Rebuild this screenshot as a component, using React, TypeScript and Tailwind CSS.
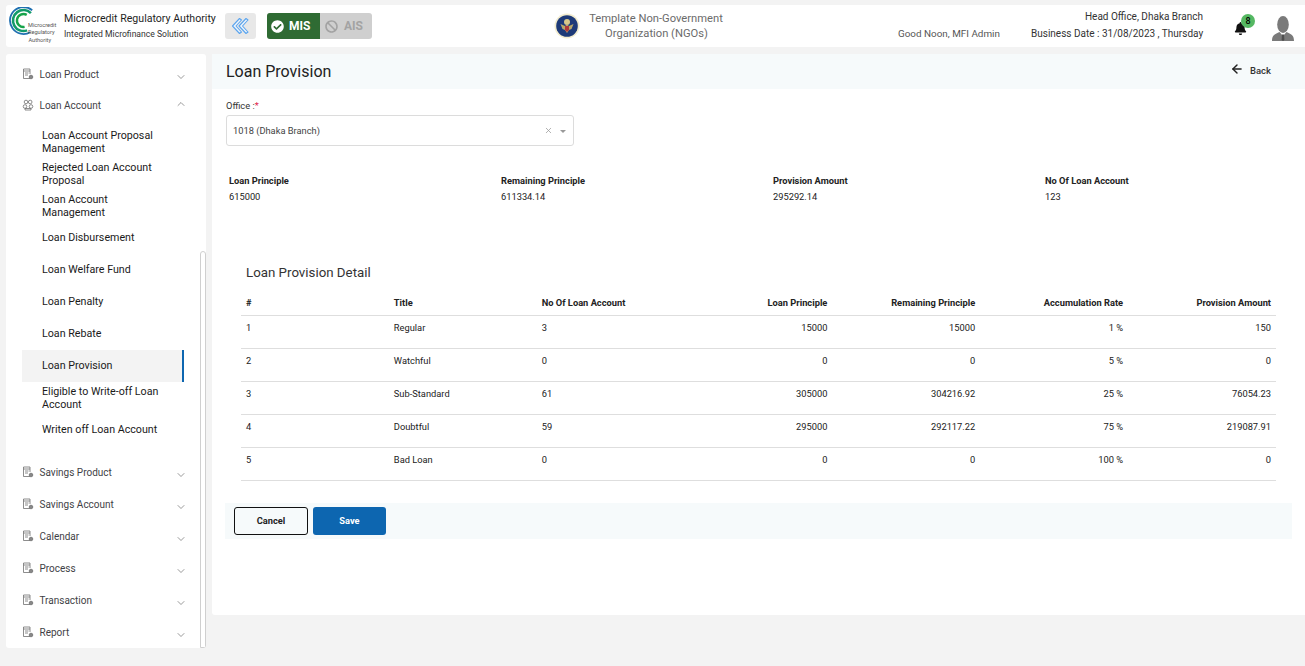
import React from "react";
import { FaBell, FaCheckCircle, FaBan } from "react-icons/fa";
import { ChevronDown, ChevronUp, ArrowLeft, X } from "lucide-react";

const Logo = () => (
  <svg width="48" height="38" viewBox="0 0 48 38" className="shrink-0">
    <path d="M23.2 3.2 A13.5 13.5 0 1 0 21.25 25.2" fill="none" stroke="#1f6fb0" strokeWidth="1.8" />
    <path d="M21.9 6.1 A10.5 10.5 0 1 0 18.1 23.4" fill="none" stroke="#129a6a" strokeWidth="2.6" />
    <path d="M17.75 7.9 A6.5 6.5 0 1 0 15.6 19.9" fill="none" stroke="#16a34a" strokeWidth="2.4" />
    <text x="19" y="19.5" fontSize="5.6" fill="#555" fontFamily="Roboto, sans-serif">Microcredit</text>
    <text x="19" y="26.5" fontSize="5.6" fill="#555" fontFamily="Roboto, sans-serif">Regulatory</text>
    <text x="19.5" y="34.5" fontSize="5.6" fill="#555" fontFamily="Roboto, sans-serif">Authority</text>
  </svg>
);

const DoubleChevron = () => (
  <svg width="20" height="18" viewBox="0 0 20 18" fill="none" stroke="#5ca5ee" strokeWidth="1.1" strokeLinejoin="round">
    <path d="M8.5 1.5 L1.5 9 L8.5 16.5 L10.5 15 L5 9 L10.5 3 Z" fill="#eef5fc" />
    <path d="M15 1.5 L8 9 L15 16.5 L17 15 L11.5 9 L17 3 Z" fill="#eef5fc" />
  </svg>
);

const Seal = () => (
  <svg width="26" height="26" viewBox="0 0 26 26">
    <circle cx="13" cy="13" r="12.5" fill="#f3edcf" />
    <circle cx="13" cy="13" r="10.8" fill="#1e3a78" />
    <circle cx="13" cy="9" r="3" fill="#d8c98a" />
    <path d="M6.5 11 L11 13 L13 11.5 L15 13 L19.5 11 L17.5 16 L15 17 L13 20 L11 17 L8.5 16 Z" fill="#b9a86a" />
    <path d="M11 13 H15 V17 L13 19 L11 17 Z" fill="#b03a3a" />
  </svg>
);

const Avatar = () => (
  <svg width="24" height="25" viewBox="0 0 24 25">
    <ellipse cx="12" cy="8.5" rx="5.8" ry="8.5" fill="#7a7a7a" />
    <path d="M1 25 C1 19 4 18 8.5 16 L12 20 L15.5 16 C20 18 23 19 23 25 Z" fill="#7a7a7a" />
    <path d="M11 18.5 L13 18.5 L13.4 24 L12 25 L10.6 24 Z" fill="#4f4f4f" />
  </svg>
);

const DocIcon = () => (
  <svg width="12" height="12" viewBox="0 0 12 12" fill="none" stroke="#707070" strokeWidth="0.8" className="shrink-0">
    <path d="M8 10.5 H1.5 V1 H8 V6" />
    <path d="M1.5 3 H8 M3 5 H6.5 M3 7 H6" />
    <circle cx="9" cy="9" r="1.8" fill="#888" />
  </svg>
);

const GroupIcon = () => (
  <svg width="12" height="12" viewBox="0 0 12 12" fill="none" stroke="#707070" strokeWidth="0.8" className="shrink-0">
    <circle cx="4" cy="3" r="1.8" />
    <circle cx="8.2" cy="3" r="1.8" />
    <circle cx="3" cy="7.5" r="1.8" />
    <circle cx="9" cy="7.5" r="1.8" />
    <path d="M3 9.5 H9 V11 H3 Z" />
  </svg>
);

const TopItem = ({ label, open, group }: { label: string; open?: boolean; group?: boolean }) => (
  <div className="h-8 flex items-center pl-[16px] pr-[19px] text-[10px] text-[#3f3f46]">
    {group ? <GroupIcon /> : <DocIcon />}
    <span className="ml-[5.5px] flex-1 leading-[13px]">{label}</span>
    {open ? (
      <ChevronUp size={12} strokeWidth={1.2} className="text-[#555] -mt-[3px]" />
    ) : (
      <ChevronDown size={12} strokeWidth={1.2} className="text-[#555] mt-[5px]" />
    )}
  </div>
);

const SubItem = ({ label, active, single }: { label: string; active?: boolean; single?: boolean }) => (
  <div
    className={`h-8 flex items-center pl-[20px] pr-[20px] ml-[16px] w-[162px] text-[10.7px] leading-[13px] text-[#1a1a1a] ${
      single ? "pb-[2px]" : ""
    } ${active ? "bg-[#f3f3f3] border-r-2 border-[#0d66b0]" : ""}`}
  >
    {label}
  </div>
);

const summary = [
  ["Loan Principle", "615000"],
  ["Remaining Principle", "611334.14"],
  ["Provision Amount", "295292.14"],
  ["No Of Loan Account", "123"],
];

const rows = [
  ["1", "Regular", "3", "15000", "15000", "1 %", "150"],
  ["2", "Watchful", "0", "0", "0", "5 %", "0"],
  ["3", "Sub-Standard", "61", "305000", "304216.92", "25 %", "76054.23"],
  ["4", "Doubtful", "59", "295000", "292117.22", "75 %", "219087.91"],
  ["5", "Bad Loan", "0", "0", "0", "100 %", "0"],
];

const heads = ["#", "Title", "No Of Loan Account", "Loan Principle", "Remaining Principle", "Accumulation Rate", "Provision Amount"];

export default function App() {
  return (
    <div className="w-[1305px] h-[666px] overflow-hidden bg-[#f3f3f3] pt-[5px] pl-[6px] text-[#222]" style={{ fontFamily: "Roboto, 'Liberation Sans', sans-serif" }}>
      <header className="h-[42px] bg-white rounded-l-[3px] flex items-center pl-[3px]">
        <Logo />
        <div className="ml-[7px] w-[161px]">
          <div className="text-[10.6px] leading-[14px] text-[#1f1f1f] whitespace-nowrap">Microcredit Regulatory Authority</div>
          <div className="text-[8.6px] leading-[14px] mt-[1px] text-[#333] whitespace-nowrap">Integrated Microfinance Solution</div>
        </div>
        <button className="w-[31px] h-[26px] bg-[#e8e8e8] rounded-[3px] flex items-center justify-center">
          <DoubleChevron />
        </button>
        <div className="ml-[11px] w-[105px] h-[26px] rounded-[3px] bg-[#cfcfcf] flex overflow-hidden">
          <div className="w-[53px] bg-[#2f6b33] flex items-center pl-[4px] gap-[5px] text-white text-[12px] font-bold">
            <FaCheckCircle size={13} className="text-white shrink-0" />
            MIS
          </div>
          <div className="flex-1 flex items-center pl-[5px] gap-[6px] text-[#a3a3a3] text-[12px] font-bold">
            <FaBan size={13} className="shrink-0" />
            AIS
          </div>
        </div>
        <div className="ml-[182px]"><Seal /></div>
        <div className="ml-[9px] mt-[1px] w-[134px] text-center text-[11.2px] leading-[14px] text-[#6b6b6b] whitespace-nowrap">
          <div>Template Non-Government</div>
          <div className="mt-[1px] pl-[1px]">Organization (NGOs)</div>
        </div>
        <div className="ml-[175px] mt-[15px] w-[115px] text-[9.9px] leading-[14px] text-[#555] whitespace-nowrap">Good Noon, MFI Admin</div>
        <div className="ml-[18px] -mt-[2px] w-[172px] text-right text-[10px] leading-[17px] text-[#333] whitespace-nowrap">
          <div>Head Office, Dhaka Branch</div>
          <div>Business Date : 31/08/2023 , Thursday</div>
        </div>
        <div className="relative ml-[31px] mt-[4px]">
          <FaBell size={13} className="text-[#111]" />
          <span className="absolute -top-[8px] left-[7px] w-[14px] h-[14px] rounded-full bg-[#55b862] text-[9px] leading-[14px] font-medium text-black text-center">8</span>
        </div>
        <div className="ml-[24px] mt-[5px]"><Avatar /></div>
      </header>

      <div className="flex mt-[7px] gap-[6px]">
        <aside className="relative w-[200px] h-[594px] bg-white rounded-[3px] pt-[4px] overflow-hidden">
          <TopItem label="Loan Product" />
          <div className="-mt-[1px]"><TopItem label="Loan Account" open group /></div>
          <div className="mt-[5px]">
            <SubItem label="Loan Account Proposal Management" />
            <SubItem label="Rejected Loan Account Proposal" />
            <SubItem label="Loan Account Management" />
            <SubItem label="Loan Disbursement" single />
            <SubItem label="Loan Welfare Fund" single />
            <SubItem label="Loan Penalty" single />
            <SubItem label="Loan Rebate" single />
            <SubItem label="Loan Provision" active single />
            <SubItem label="Eligible to Write-off Loan Account" />
            <SubItem label="Writen off Loan Account" single />
          </div>
          <div className="mt-[10px]">
            <TopItem label="Savings Product" />
            <TopItem label="Savings Account" />
            <TopItem label="Calendar" />
            <TopItem label="Process" />
            <TopItem label="Transaction" />
            <TopItem label="Report" />
          </div>
          <div className="absolute right-[0px] top-[197px] bottom-0 w-[6px] rounded-t-[3px] border border-[#cfcfcf] bg-white" />
        </aside>

        <main className="flex-1 h-[561px] bg-white rounded-l-[3px]">
          <div className="h-[35px] bg-[#f6fafb] flex items-center pl-[14px] pr-[34px]">
            <h1 className="flex-1 text-[16px] font-normal text-[#222]">Loan Provision</h1>
            <div className="flex items-center gap-[6px] text-[9.5px] font-medium text-[#333]">
              <ArrowLeft size={14} strokeWidth={2.5} className="text-[#222] -mt-[6px]" />
              Back
            </div>
          </div>

          <div className="pl-[14px] pt-[11px]">
            <label className="block text-[9.3px] leading-[12px] text-[#333]">
              Office :<span className="text-[#e11d48]">*</span>
            </label>
            <div className="mt-[3px] w-[348px] h-[31px] border border-[#dcdcdc] rounded-[3px] flex items-center pl-[6px] pr-[7px] text-[9.3px] text-[#444]">
              <span className="flex-1 pt-[1px]">1018 (Dhaka Branch)</span>
              <X size={9} className="text-[#999]" />
              <span className="ml-[7px] w-0 h-0 border-x-[3px] border-x-transparent border-t-[3px] border-t-[#999] mt-[2px]" />
            </div>
          </div>

          <div className="grid grid-cols-[272px_272px_272px_200px] pl-[17px] mt-[29px]">
            {summary.map(([k, v]) => (
              <div key={k}>
                <div className="text-[9.3px] leading-[12px] font-bold text-[#222]">{k}</div>
                <div className="text-[9.3px] leading-[12px] mt-[4px] text-[#222]">{v}</div>
              </div>
            ))}
          </div>

          <div className="ml-[29px] mt-[62px] w-[1035px]">
            <h2 className="pl-[5px] text-[13.3px] leading-[16px] font-normal text-[#333]">Loan Provision Detail</h2>
            <table className="w-full mt-[6px] table-fixed text-[9.3px] text-[#222]">
              <thead>
                <tr className="border-b border-[#dedede] h-[28px]">
                  {heads.map((h, i) => (
                    <th key={h} className={`font-bold px-[5px] pt-[5px] align-middle ${i > 2 ? "text-right" : "text-left"}`}>{h}</th>
                  ))}
                </tr>
              </thead>
              <tbody>
                {rows.map((r) => (
                  <tr key={r[0]} className="border-b border-[#dedede] h-[33px]">
                    {r.map((c, i) => (
                      <td key={i} className={`px-[5px] pt-[6px] pb-[14px] leading-[12px] align-top ${i > 2 ? "text-right" : "text-left"}`}>{c}</td>
                    ))}
                  </tr>
                ))}
              </tbody>
            </table>
          </div>

          <div className="ml-[13px] mr-[13px] mt-[22px] h-[36px] bg-[#f6fafb] flex items-center pl-[9px] gap-[5px]">
            <button className="w-[74px] h-[28px] border border-[#111] rounded-[3px] text-[9.3px] font-bold text-[#222]">Cancel</button>
            <button className="w-[73px] h-[28px] bg-[#0d66b0] rounded-[3px] text-[9.3px] font-bold text-white">Save</button>
          </div>
        </main>
      </div>
    </div>
  );
}
